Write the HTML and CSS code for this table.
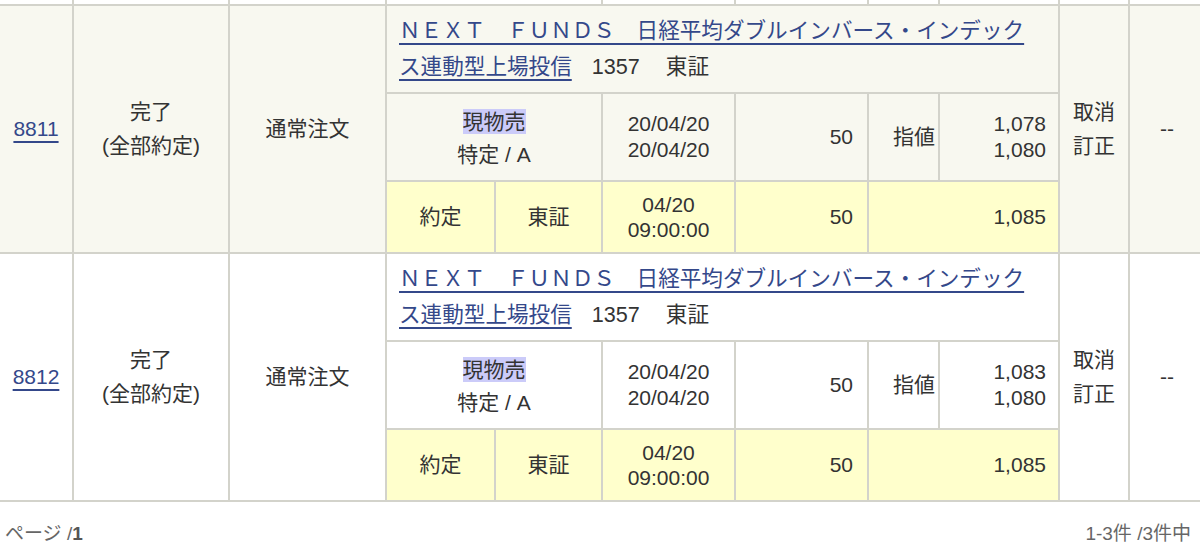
FILE: index.html
```html
<!DOCTYPE html>
<html lang="ja">
<head>
<meta charset="utf-8">
<title>注文一覧</title>
<link rel="stylesheet" href="styles.css">
</head>
<body>
<table class="orders">
  <colgroup>
    <col class="c-no"><col class="c-status"><col class="c-type"><col class="c-a"><col class="c-b"><col class="c-date"><col class="c-qty"><col class="c-kind"><col class="c-price"><col class="c-act"><col class="c-etc">
  </colgroup>
  <tbody>
    <tr class="strip">
      <td></td><td></td><td></td><td colspan="2"></td><td></td><td></td><td></td><td></td><td></td><td></td>
    </tr>

    <tr class="fund-row g-cream">
      <td rowspan="3" class="no"><a href="#">8811</a></td>
      <td rowspan="3" class="status">完了<br>(全部約定)</td>
      <td rowspan="3" class="otype">通常注文</td>
      <td colspan="6" class="fund"><a href="#">ＮＥＸＴ　ＦＵＮＤＳ　日経平均ダブルインバース・インデックス連動型上場投信</a><span class="code">1357</span><span class="mkt">東証</span></td>
      <td rowspan="3" class="act">取消<br>訂正</td>
      <td rowspan="3" class="etc">--</td>
    </tr>
    <tr class="order-row g-cream">
      <td colspan="2" class="side"><span class="hl">現物売</span><br>特定 / A</td>
      <td class="date">20/04/20<br>20/04/20</td>
      <td class="num">50</td>
      <td class="kind">指値</td>
      <td class="num price">1,078<br>1,080</td>
    </tr>
    <tr class="exec-row">
      <td>約定</td>
      <td>東証</td>
      <td class="date exec">04/20<br>09:00:00</td>
      <td class="num">50</td>
      <td colspan="2" class="num price">1,085</td>
    </tr>

    <tr class="fund-row g-white">
      <td rowspan="3" class="no"><a href="#">8812</a></td>
      <td rowspan="3" class="status">完了<br>(全部約定)</td>
      <td rowspan="3" class="otype">通常注文</td>
      <td colspan="6" class="fund"><a href="#">ＮＥＸＴ　ＦＵＮＤＳ　日経平均ダブルインバース・インデックス連動型上場投信</a><span class="code">1357</span><span class="mkt">東証</span></td>
      <td rowspan="3" class="act">取消<br>訂正</td>
      <td rowspan="3" class="etc">--</td>
    </tr>
    <tr class="order-row g-white">
      <td colspan="2" class="side"><span class="hl">現物売</span><br>特定 / A</td>
      <td class="date">20/04/20<br>20/04/20</td>
      <td class="num">50</td>
      <td class="kind">指値</td>
      <td class="num price">1,083<br>1,080</td>
    </tr>
    <tr class="exec-row">
      <td>約定</td>
      <td>東証</td>
      <td class="date exec">04/20<br>09:00:00</td>
      <td class="num">50</td>
      <td colspan="2" class="num price">1,085</td>
    </tr>
  </tbody>
</table>

<div class="pager">
  <span class="page">ページ /<b>1</b></span>
  <span class="count">1-3件 /3件中</span>
</div>
</body>
</html>
```

FILE: styles.css
```css
html, body {
  margin: 0;
  padding: 0;
  background: #ffffff;
  overflow: hidden;
}

body {
  width: 1200px;
  height: 556px;
  font-family: "Liberation Sans", "Noto Sans CJK JP", sans-serif;
  font-size: 21px;
  color: #333333;
}

a {
  color: #34488a;
  text-decoration: underline;
  text-decoration-thickness: 1.5px;
  text-underline-offset: 5px;
}

.orders {
  border-collapse: collapse;
  table-layout: fixed;
  width: 1206px;
  margin-left: -2px;
}

.c-no { width: 74px; }
.c-status { width: 156px; }
.c-type { width: 157px; }
.c-a { width: 109px; }
.c-b { width: 107px; }
.c-date { width: 133px; }
.c-qty { width: 133px; }
.c-kind { width: 71px; }
.c-price { width: 120px; }
.c-act { width: 70px; }
.c-etc { width: 76px; }

.orders td {
  border: 2px solid #d3d3cb;
  padding: 0 6px;
  text-align: center;
  vertical-align: middle;
  line-height: 34px;
}

.strip { height: 5px; }
.strip td {
  border-top: none;
  padding: 0;
  line-height: 0;
  font-size: 0;
  background: #ffffff;
}

.fund-row { height: 88px; }
.order-row { height: 88px; }
.exec-row { height: 72px; }

.g-cream td { background: #f8f8f0; }
.g-white td { background: #ffffff; }
.exec-row td { background: #ffffcc; }

.fund {
  text-align: left !important;
  font-size: 21.6px;
  line-height: 36px !important;
  padding: 0 18px 0 12px !important;
}

.code { margin-left: 20px; }
.mkt { margin-left: 26px; }

.side { line-height: 35px !important; }

.hl {
  display: inline-block;
  line-height: 25px;
  background: #cbcbf9;
  vertical-align: middle;
}

.date { line-height: 26px !important; }
.date.exec { line-height: 25px !important; }

.num {
  text-align: right !important;
  padding-right: 14px !important;
}
.price {
  line-height: 26px !important;
  padding-right: 12px !important;
}

.kind {
  text-align: right !important;
  padding-right: 3px !important;
}

.pager {
  display: flex;
  justify-content: space-between;
  align-items: center;
  height: 58px;
  padding: 0 9px 0 5px;
  font-size: 19px;
  color: #666666;
}

.pager b { color: #555555; }
```
